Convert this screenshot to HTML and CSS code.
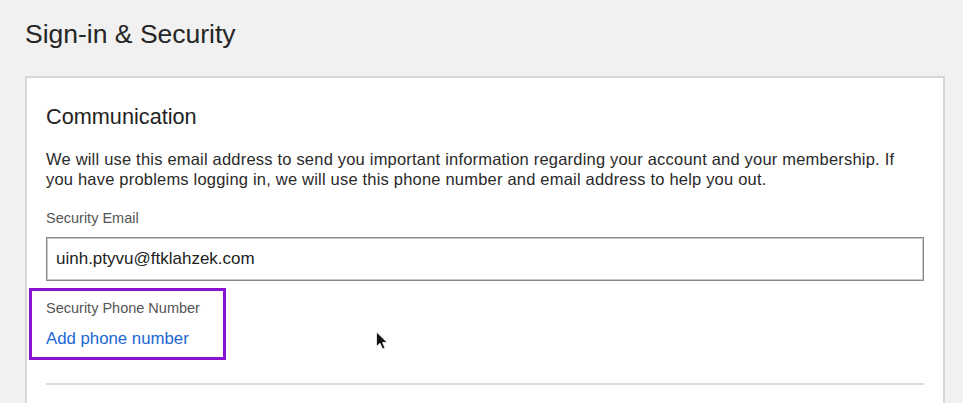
FILE: index.html
```html
<!DOCTYPE html>
<html lang="en">
<head>
    <meta charset="UTF-8">
    <meta name="viewport" content="width=device-width, initial-scale=1.0">
    <title>Sign-in &amp; Security</title>
    <link rel="stylesheet" href="styles.css">
</head>
<body>
    <h1 class="page-title">Sign-in &amp; Security</h1>

    <div class="card">
        <h2>Communication</h2>
        <p class="intro">We will use this email address to send you important information regarding your account and your membership. If you have problems logging in, we will use this phone number and email address to help you out.</p>

        <label class="field-label" for="email">Security Email</label>
        <input type="text" id="email" class="field-input" value="uinh.ptyvu@ftklahzek.com">

        <div class="phone-row">
            <div class="highlight">
                <div class="field-label">Security Phone Number</div>
                <a href="#" class="link">Add phone number</a>
            </div>
            <svg class="cursor" width="14" height="20" viewBox="0 0 14 20">
                <path d="M1.5 1 L1.5 15.5 L5 12.3 L7.6 18 L10 17 L7.5 11.4 L12.2 11.4 Z" fill="#111" stroke="#fff" stroke-width="0.8"/>
            </svg>
        </div>

        <hr class="divider">
    </div>
</body>
</html>
```

FILE: styles.css
```css
:root {
    --page-bg: #f1f1f1;
    --card-bg: #ffffff;
    --text-color: #222;
    --muted-color: #555;
    --link-color: #1b67d6;
    --mark-color: #8a12d0;
}

body {
    margin: 0;
    padding: 0;
    background: var(--page-bg);
    color: var(--text-color);
    font-family: "Liberation Sans", Arial, sans-serif;
}

.page-title {
    margin: 20px 0 0 25px;
    font-size: 26.5px;
    line-height: 28px;
    font-weight: normal;
    color: #262626;
}

.card {
    margin: 28px 0 0 25px;
    width: 878px;
    padding: 27px 19px 20px;
    background: var(--card-bg);
    border: 2px solid #d6d6d6;
    border-bottom: none;
}

.card h2 {
    margin: 0;
    font-size: 21.7px;
    line-height: 24px;
    font-weight: normal;
    color: #222;
}

.intro {
    max-width: 860px;
    margin: 20px 0 0;
    font-size: 16.5px;
    line-height: 20px;
    letter-spacing: 0.2px;
    color: #2a2a2a;
}

.field-label {
    display: block;
    margin-top: 20px;
    font-size: 14.5px;
    line-height: 18px;
    color: var(--muted-color);
}

.field-input {
    display: block;
    box-sizing: border-box;
    width: 100%;
    height: 44px;
    margin-top: 10px;
    padding: 0 9px;
    border: 1px solid #8a8a8a;
    box-shadow: inset 0 0 0 1px #c8c8c8;
    font-family: inherit;
    font-size: 17px;
    color: #222;
    background: #fff;
}

.phone-row {
    position: relative;
    margin-top: 18px;
}

.highlight {
    position: relative;
    display: inline-block;
}

.highlight .field-label {
    margin-top: 0;
}

.highlight::after {
    content: "";
    position: absolute;
    top: -11px;
    left: -17px;
    right: -26px;
    bottom: -11px;
    border: 3px solid var(--mark-color);
}

.link {
    display: block;
    margin-top: 12px;
    font-size: 16.8px;
    line-height: 20px;
    color: var(--link-color);
    text-decoration: none;
}

.cursor {
    position: absolute;
    left: 329px;
    top: 32px;
}

.divider {
    margin: 34px 0 0;
    border: none;
    height: 2px;
    background: #dcdcdc;
}
```
